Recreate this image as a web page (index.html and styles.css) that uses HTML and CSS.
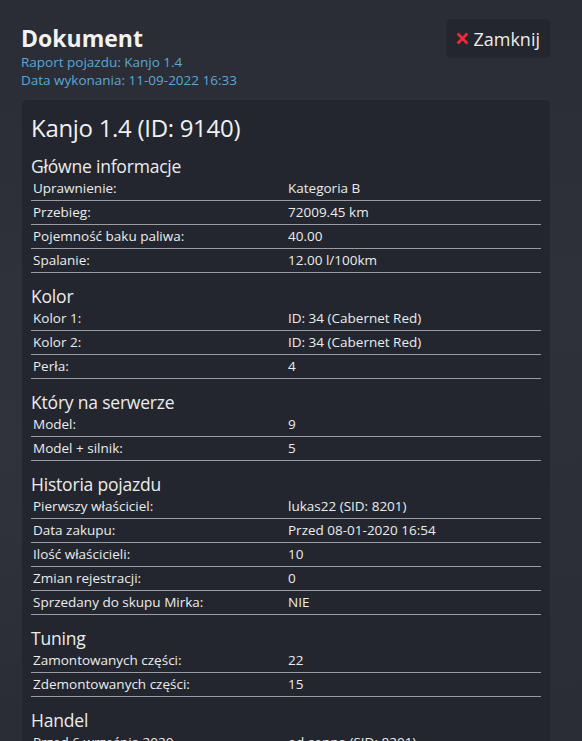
FILE: index.html
```html
<!DOCTYPE html>
<html lang="pl">
<head>
<meta charset="utf-8">
<title>Dokument</title>
<link rel="stylesheet" href="styles.css">
</head>
<body>
<div class="page">
  <header class="top">
    <div class="head-text">
      <h1 class="doc-title">Dokument</h1>
      <div class="sub">Raport pojazdu: Kanjo 1.4</div>
      <div class="sub">Data wykonania: 11-09-2022 16:33</div>
    </div>
    <button class="close-btn">
      <svg class="x-icon" width="13" height="13" viewBox="0 0 13 13"><path d="M1.6 1.6 L11.4 11.4 M11.4 1.6 L1.6 11.4" stroke="#ee2a3a" stroke-width="2.8" stroke-linecap="butt"/></svg>
      <span>Zamknij</span>
    </button>
  </header>
  <main class="card">
    <h2 class="card-title">Kanjo 1.4 (ID: 9140)</h2>

    <h3 class="sec">Główne informacje</h3>
    <div class="tbl">
      <div class="row"><span>Uprawnienie:</span><span>Kategoria B</span></div>
      <div class="row"><span>Przebieg:</span><span>72009.45 km</span></div>
      <div class="row"><span>Pojemność baku paliwa:</span><span>40.00</span></div>
      <div class="row"><span>Spalanie:</span><span>12.00 l/100km</span></div>
    </div>

    <h3 class="sec">Kolor</h3>
    <div class="tbl">
      <div class="row"><span>Kolor 1:</span><span>ID: 34 (Cabernet Red)</span></div>
      <div class="row"><span>Kolor 2:</span><span>ID: 34 (Cabernet Red)</span></div>
      <div class="row"><span>Perła:</span><span>4</span></div>
    </div>

    <h3 class="sec">Który na serwerze</h3>
    <div class="tbl">
      <div class="row"><span>Model:</span><span>9</span></div>
      <div class="row"><span>Model + silnik:</span><span>5</span></div>
    </div>

    <h3 class="sec">Historia pojazdu</h3>
    <div class="tbl">
      <div class="row"><span>Pierwszy właściciel:</span><span>lukas22 (SID: 8201)</span></div>
      <div class="row"><span>Data zakupu:</span><span>Przed 08-01-2020 16:54</span></div>
      <div class="row"><span>Ilość właścicieli:</span><span>10</span></div>
      <div class="row"><span>Zmian rejestracji:</span><span>0</span></div>
      <div class="row"><span>Sprzedany do skupu Mirka:</span><span>NIE</span></div>
    </div>

    <h3 class="sec">Tuning</h3>
    <div class="tbl">
      <div class="row"><span>Zamontowanych części:</span><span>22</span></div>
      <div class="row"><span>Zdemontowanych części:</span><span>15</span></div>
    </div>

    <h3 class="sec">Handel</h3>
    <div class="tbl">
      <div class="row"><span>Przed 6 września 2020</span><span>od senna (SID: 8201)</span></div>
    </div>
  </main>
</div>
</body>
</html>
```
FILE: styles.css
```css
html, body {
  margin: 0;
  padding: 0;
  height: 100%;
  overflow: hidden;
}
body {
  font-family: "Open Sans", "Noto Sans", sans-serif;
  color: #e6e6e6;
  background: #2b2e37;
  background-image:
    radial-gradient(ellipse at 0% 60%, #30333b 0%, rgba(48,51,59,0) 40%),
    linear-gradient(180deg, #2a2d35 0%, #2e3139 40%, #2a2d35 100%);
}
.page {
  padding: 19px 32px 0 21px;
}
.top {
  display: flex;
  justify-content: space-between;
  align-items: flex-start;
}
.doc-title {
  margin: 0;
  padding-top: 5px;
  font-size: 23px;
  line-height: 29px;
  font-weight: 700;
  color: #f2f2f2;
}
.sub {
  font-size: 13.5px;
  line-height: 18px;
  color: #5aa7d8;
}
.close-btn {
  display: flex;
  align-items: center;
  gap: 4px;
  height: 39px;
  padding: 0 10px 0 10px;
  border: 0;
  border-radius: 5px;
  background: #23262d;
  color: #ececec;
  font-family: "Open Sans", sans-serif;
  font-size: 18px;
  cursor: pointer;
}
.x-icon { display: block; }
.card {
  margin: 11px 0 0 1px;
  background: #23262e;
  border-radius: 5px;
  padding: 13px 9px 20px 9px;
}
.card-title {
  margin: 0;
  font-size: 24px;
  line-height: 30px;
  font-weight: 400;
  letter-spacing: -0.3px;
  color: #f0f0f0;
}
.sec {
  margin: 12px 0 0 0;
  font-size: 17.5px;
  line-height: 22px;
  font-weight: 400;
  letter-spacing: -0.2px;
  color: #ececec;
}
.tbl {
  display: flex;
  flex-direction: column;
}
.row {
  display: grid;
  grid-template-columns: 1fr 1fr;
  height: 23px;
  border-bottom: 1px solid #9a9ca0;
  font-size: 13.5px;
  line-height: 23px;
  color: #ececec;
}
.row span {
  padding-left: 2px;
  white-space: nowrap;
}
```
